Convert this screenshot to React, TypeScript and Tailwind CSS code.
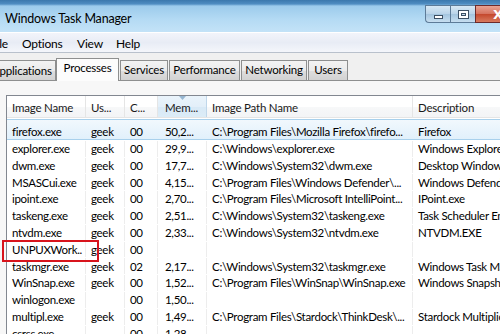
import React from "react";

const rows: string[][] = [
  ["firefox.exe", "geek", "00", "50,2...", "C:\\Program Files\\Mozilla Firefox\\firefo...", "Firefox"],
  ["explorer.exe", "geek", "00", "29,9...", "C:\\Windows\\explorer.exe", "Windows Explorer"],
  ["dwm.exe", "geek", "00", "17,7...", "C:\\Windows\\System32\\dwm.exe", "Desktop Window Manager"],
  ["MSASCui.exe", "geek", "00", "4,15...", "C:\\Program Files\\Windows Defender\\...", "Windows Defender"],
  ["ipoint.exe", "geek", "00", "2,70...", "C:\\Program Files\\Microsoft IntelliPoint...", "IPoint.exe"],
  ["taskeng.exe", "geek", "00", "2,51...", "C:\\Windows\\System32\\taskeng.exe", "Task Scheduler Engine"],
  ["ntvdm.exe", "geek", "00", "2,33...", "C:\\Windows\\System32\\ntvdm.exe", "NTVDM.EXE"],
  ["UNPUXWork..", "geek", "00", "", "", ""],
  ["taskmgr.exe", "geek", "02", "2,17...", "C:\\Windows\\System32\\taskmgr.exe", "Windows Task Manager"],
  ["WinSnap.exe", "geek", "00", "1,52...", "C:\\Program Files\\WinSnap\\WinSnap.exe", "Windows Snapshot"],
  ["winlogon.exe", "", "00", "1,50...", "", ""],
  ["multipl.exe", "geek", "00", "1,49...", "C:\\Program Files\\Stardock\\ThinkDesk\\...", "Stardock Multiplicity"],
  ["csrss.exe", "", "00", "1,28...", "", ""],
];

const widths = ["w-[79px]", "w-[39px]", "w-[33px]", "w-[49px]", "w-[206px]", "w-[140px]"];
const headers = ["Image Name", "Us...", "C...", "Mem...", "Image Path Name", "Description"];

const tabBg =
  "bg-[linear-gradient(to_bottom,#f3f3f3,#ebebeb_50%,#dedede_51%,#d2d2d2)]";

export default function App() {
  return (
    <div
      className="relative w-[500px] h-[334px] overflow-hidden bg-[#f0f0f0] flex flex-col text-[#000]"
      style={{ fontFamily: 'Lato, "Noto Sans", sans-serif' }}
    >
      {/* Title bar */}
      <div className="h-[32px] shrink-0 flex bg-[linear-gradient(to_bottom,#3b78ad_0px,#4f8dc2_4px,#9ccbec_6px,#b5dbf4_20px,#c2e2f7_31px)]">
        <div className="flex-1 pl-[5px] pt-[10px] text-[12.5px] tracking-[-0.2px] leading-[18px] text-[#000] whitespace-nowrap">
          Windows Task Manager
        </div>
        <div className="flex h-[18px] mt-[5px] shrink-0 -mr-[18px]">
          <div className="w-[25px] h-full border border-[#5d7b98] border-r-0 rounded-bl-[4px] bg-[linear-gradient(to_bottom,#d7e8f5,#b9d3e8_50%,#a3c4de_51%,#c6def0)] flex items-center justify-center">
            <div className="w-[9px] h-[4px] mt-[5px] border border-[#3c4f63] bg-white" />
          </div>
          <div className="w-[25px] h-full border border-[#5d7b98] border-r-0 bg-[linear-gradient(to_bottom,#d7e8f5,#b9d3e8_50%,#a3c4de_51%,#c6def0)] flex items-center justify-center">
            <div className="w-[11px] h-[9px] border border-[#3c4f63] bg-white flex items-center justify-center">
              <div className="w-[5px] h-[3px] border border-[#3c4f63] bg-[#c6dcee]" />
            </div>
          </div>
          <div className="w-[43px] h-full border border-[#6d2a2a] bg-[linear-gradient(to_bottom,#e8a393,#d5715d_50%,#c4472c_51%,#d87a5e)] flex items-center justify-start pl-[17px]">
            <span className="text-white font-bold text-[13px] leading-none" style={{ fontFamily: '"DejaVu Sans", sans-serif' }}>X</span>
          </div>
        </div>
      </div>
      {/* Menu bar */}
      <div className="h-[21px] shrink-0 border-t border-[#ffffff] border-b border-b-[#b9c1cc] bg-[linear-gradient(to_bottom,#f2f4fa,#e8ecf5_50%,#f4f6fb)] flex items-center text-[12px] tracking-[-0.2px] leading-none pt-[3px]">
        <span className="-ml-[10px] w-[32px]">File</span>
        <span className="w-[55px]">Options</span>
        <span className="w-[39px]">View</span>
        <span>Help</span>
      </div>
      {/* Tabs */}
      <div className="h-[27px] shrink-0 flex items-end text-[11.5px] tracking-[-0.2px] leading-none whitespace-nowrap">
        <div className={`h-[20px] w-[70px] -ml-[14px] pl-[5px] border border-b-0 border-[#8e8f8f] ${tabBg} flex items-center`}>
          Applications
        </div>
        <div className="relative z-10 h-[23px] -mb-[1px] w-[63px] border border-b-0 border-[#8e8f8f] bg-[#fcfcfc] flex items-center justify-center pb-[4px]">
          Processes
        </div>
        {[
          ["Services", "w-[48px]"],
          ["Performance", "w-[71px]"],
          ["Networking", "w-[66px]"],
          ["Users", "w-[40px]"],
        ].map(([t, w]) => (
          <div
            key={t}
            className={`h-[20px] ${w} ml-[1px] border border-b-0 border-[#8e8f8f] ${tabBg} flex items-center justify-center pb-[1px]`}
          >
            {t}
          </div>
        ))}
      </div>
      {/* Panel */}
      <div className="flex-1 border-t border-[#8e8f8f] bg-[#f7f7f7] pl-[6px] pt-[14px]">
        <div className="h-full border-l border-t border-[#828790] bg-white text-[11.5px] tracking-[-0.3px] leading-none">
          {/* Header */}
          <div className="flex h-[22px] bg-[linear-gradient(to_bottom,#ffffff,#ffffff_50%,#f7f8f9_51%,#f3f4f6)] border-b border-[#e5e5e5] text-[#1a1a1a] tracking-[-0.2px]">
            {headers.map((h, i) => (
              <div
                key={h}
                className={`${widths[i]} shrink-0 relative flex items-center whitespace-nowrap border-r border-[#e5e5e5] pt-[3px] ${
                  i === 3 ? "pl-[7px] bg-[linear-gradient(to_bottom,#eaf4fb,#e3eff9_50%,#d8e9f6_51%,#dcecf7)] border-r-[#c0d7ea]" : "pl-[5px]"
                }`}
              >
                {i === 3 && (
                  <svg className="absolute left-[21px] top-[0px]" width="7" height="4" viewBox="0 0 7 4">
                    <path d="M0 0 L7 0 L3.5 4 Z" fill="#97b7d2" />
                  </svg>
                )}
                {h}
              </div>
            ))}
          </div>
          {/* Body */}
          <div className="relative pt-[1px]">
            {rows.map((r, ri) => (
              <div
                key={ri}
                className={`flex items-center ${
                  ri === 0
                    ? "h-[20.8px] pt-[4px] bg-[linear-gradient(to_bottom,#f1f8fd,#e1f0fb)] border-y border-[#a8d0ec]"
                    : "h-[16.8px] pt-[1px]"
                }`}
              >
                {r.map((c, ci) => (
                  <div
                    key={ci}
                    className={`${widths[ci]} shrink-0 h-full flex items-center whitespace-nowrap overflow-hidden border-r ${
                      ri === 0 ? "border-transparent" : "border-[#ededed]"
                    } ${ci === 3 ? "pl-[7px]" : "pl-[5px]"}`}
                  >
                    {c}
                  </div>
                ))}
              </div>
            ))}
          </div>
        </div>
      </div>
      {/* red highlight box */}
      <div className="absolute left-[2px] top-[240px] w-[97px] h-[22px] border-2 border-[#d8141c] pointer-events-none" />
    </div>
  );
}
